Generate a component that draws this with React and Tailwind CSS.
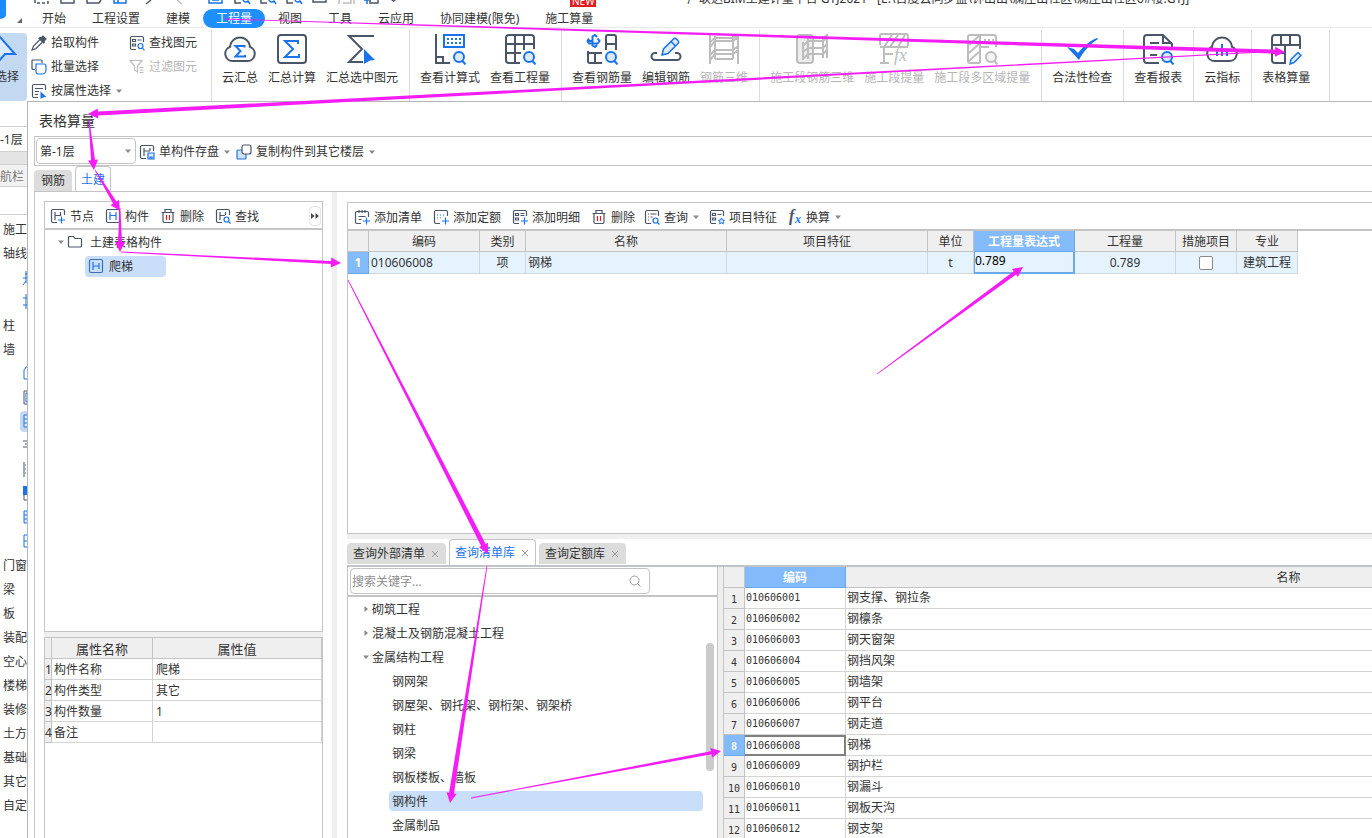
import React, { useState } from 'react';

const DARK = '#4b5568';
const BLUE = '#1a73e8';
const GRAY = '#bdbdbd';

const MENU = ['开始', '工程设置', '建模', '工程量', '视图', '工具', '云应用', '协同建模(限免)', '施工算量'];

const RIBBON = [
  [
    { label: '云汇总', icon: 'cloudSum' },
    { label: '汇总计算', icon: 'sum' },
    { label: '汇总选中图元', icon: 'sumSelected' },
  ],
  [
    { label: '查看计算式', icon: 'formula' },
    { label: '查看工程量', icon: 'gridView' },
  ],
  [
    { label: '查看钢筋量', icon: 'rebarView' },
    { label: '编辑钢筋', icon: 'rebarEdit' },
    { label: '钢筋三维', icon: 'rebar3d', disabled: true },
  ],
  [
    { label: '施工段钢筋三维', icon: 'section3d', disabled: true },
    { label: '施工段提量', icon: 'sectionFx', disabled: true },
    { label: '施工段多区域提量', icon: 'sectionArea', disabled: true },
  ],
  [{ label: '合法性检查', icon: 'check' }],
  [{ label: '查看报表', icon: 'report' }],
  [{ label: '云指标', icon: 'cloudChart' }],
  [{ label: '表格算量', icon: 'tableEdit' }],
];

const NAV = [
  { text: '施工' },
  { text: '轴线' },
  { icon: 'axis' },
  { icon: 'axis2' },
  { text: '柱' },
  { text: '墙' },
  { icon: 'box' },
  { icon: 'double' },
  { icon: 'grid', active: true },
  { icon: 'lines' },
  { icon: 'dots' },
  { icon: 'solid' },
  { icon: 'grid' },
  { icon: 'window' },
  { text: '门窗' },
  { text: '梁' },
  { text: '板' },
  { text: '装配' },
  { text: '空心' },
  { text: '楼梯' },
  { text: '装修' },
  { text: '土方' },
  { text: '基础' },
  { text: '其它' },
  { text: '自定' },
];

const PROPS = [
  ['构件名称', '爬梯'],
  ['构件类型', '其它'],
  ['构件数量', '1'],
  ['备注', ''],
];

const CHAPTERS = ['钢网架', '钢屋架、钢托架、钢桁架、钢架桥', '钢柱', '钢梁', '钢板楼板、墙板', '钢构件', '金属制品'];

const ITEMS = [
  '钢支撑、钢拉条',
  '钢檩条',
  '钢天窗架',
  '钢挡风架',
  '钢墙架',
  '钢平台',
  '钢走道',
  '钢梯',
  '钢护栏',
  '钢漏斗',
  '钢板天沟',
  '钢支架',
];

// x1, y1, x2, y2, thickness at the head
const ARROWS = [
  [225, 19, 1285, 52, 4],
  [1262, 52, 88, 114, 4],
  [89, 120, 94, 170, 4],
  [95, 170, 120, 211, 4],
  [120, 208, 120, 252, 4],
  [121, 252, 341, 263, 3],
  [348, 280, 488, 554, 5],
  [487, 566, 450, 803, 5],
  [471, 798, 721, 751, 3],
  [877, 374, 1023, 267, 4],
];

const CLOUD = 'M8.5 28a7.3 7.3 0 0 1-2.3-14.2V12.600a10 10 0 0 1 19.600 0V13.800A7.300 7.300 0 0 1 23.500 28z';
const GRID_FRAME = 'M30 16V5a3 3 0 0 0-3-3H5a3 3 0 0 0-3 3v22a3 3 0 0 0 3 3h11';

function Lens({ color = BLUE, fill = '#dbeafc' }) {
  return (
    <g stroke={color}>
      <circle cx="25" cy="24" r="5" fill={fill} />
      <path d="M28.500 28l3 3.500" />
    </g>
  );
}

const BIG = {
  cloudSum: (
    <>
      <path d={CLOUD} />
      <path stroke={BLUE} d="M20.500 14.500V13H11.500l5 5-5 5.500h9.500V22" />
    </>
  ),
  sum: (
    <>
      <rect x="2" y="2" width="28" height="28" rx="3" />
      <path stroke={BLUE} d="M22 11V8H9l8 8-8 8h14v-3" />
    </>
  ),
  sumSelected: (
    <>
      <path d="M28 3H3l13 13L3 29h14" />
      <path fill={BLUE} stroke="none" d="M18 16l11 11-5 .500-6 3.500z" />
    </>
  ),
  formula: (
    <>
      <path d="M2 1v29h14M2 24h7v6" />
      <rect x="10" y="2" width="20" height="12" stroke={BLUE} />
      <path stroke={BLUE} strokeDasharray="2 2" d="M13 6h14M13 10h14" />
      <Lens />
    </>
  ),
  gridView: (
    <>
      <path d={GRID_FRAME} />
      <path d="M2 11h28M2 20h15M11 2v28M20 2v15" />
      <Lens />
    </>
  ),
  rebarView: (
    <>
      <path d="M20 17V4a2 2 0 0 1 2-2h6a2 2 0 0 1 2 2v13M20 11h10M2 18v10a2 2 0 0 0 2 2h12M2 20h14M9 20v10" />
      <path stroke={BLUE} d="M11 4L9 2 6.500 3.500v9L9 14l2-2M3 5.500L1.500 8 3 10.500h8.500l2-2.500-2-2.500M1.500 8h4" />
      <Lens />
    </>
  ),
  rebarEdit: (
    <>
      <path d="M7 20H5a3.500 3.500 0 0 0 0 7h22a3.500 3.500 0 0 0 0-7h-2" />
      <g stroke={BLUE} strokeWidth="1.500">
        <path fill="#dbeafc" d="M12 22l1.500-6L23.500 6a2 2 0 0 1 3 0l1.500 1.500a2 2 0 0 1 0 3L18 20.500z" />
        <path d="M21 8.500l4.500 4.500" />
      </g>
    </>
  ),
  rebar3d: <path d="M2 1v30M7 3v23M25 3v23M30 1v30M2 9l5-4h18l5-3M2 14l5-6h18l5-4M2 22l5-5h18l5-4M2 27l5-6h18l5-4M7 26h18" />,
  section3d: (
    <>
      <rect x="1" y="2" width="16" height="28" rx="3" fill="#ececec" />
      <path d="M7 9v18M12 4v22M27 3v22M31 1v24M7 13l5-5h15l4-3M7 19l5-4h15l4-4M7 26l5-5h15l4-4M12 5h15l4-3" />
    </>
  ),
  sectionFx: (
    <>
      <path d="M2 12V3a2 2 0 0 1 2-2h24a2 2 0 0 1 2 2v10M2 14h28M6 14l8-12M12 14l8-12M20 14l7-12M6 15v15M2 30h9M6 21h9" />
      <text x="16" y="28" fontSize="18" fontStyle="italic" fontFamily="Liberation Serif, serif" fill={GRAY} stroke="none">
        fx
      </text>
    </>
  ),
  sectionArea: (
    <>
      <path d="M14 30H4a2 2 0 0 1-2-2V4a2 2 0 0 1 2-2h24a2 2 0 0 1 2 2v10M14 2v28M3 12l10-9M3 20l10-9M3 28l10-9M14 14h9" />
      <path strokeDasharray="2 2" d="M18 7h10" />
      <Lens color={GRAY} fill="#f5f5f5" />
    </>
  ),
  check: <path fill={BLUE} stroke="none" d="M1 14l7 2 4 4C17 14 23 8 31 5l1 1C24 11 17 19 13 27z" />,
  report: (
    <>
      <path d="M17 30H5a3 3 0 0 1-3-3V5a3 3 0 0 1 3-3h16l9 9v4M21 2v8h9M8 10h9M8 22h7" />
      <Lens />
    </>
  ),
  cloudChart: (
    <>
      <path d={CLOUD} />
      <path stroke={BLUE} d="M11 17v6M16 11v12M21 16v7" />
    </>
  ),
  tableEdit: (
    <>
      <path d={GRID_FRAME} />
      <path d="M2 12h28M2 20h14M11 2v10M20 2v10M15 12v18" />
      <path stroke={BLUE} strokeWidth="1.500" fill="#dbeafc" d="M20 31l1-4.500 7-7 3 3-7 7z" />
    </>
  ),
};

function BigIcon({ name, disabled }) {
  return (
    <svg className="h-8 w-8 shrink-0" viewBox="0 0 32 32" fill="none" stroke={disabled ? GRAY : DARK} strokeWidth="2">
      {BIG[name]}
    </svg>
  );
}

const FRAME = 'M7 14.500H3A1.500 1.500 0 0 1 1.500 13V3A1.500 1.500 0 0 1 3 1.500h10A1.500 1.500 0 0 1 14.500 3v4';

const SMALL = {
  picker: (
    <>
      <path fill={DARK} d="M10 3l2-2 3 3-2 2 .500 1-1 1L8 3.500l1-1z" />
      <path d="M8.500 5L2.500 11l-1.500 4 4-1.500L11 7.500" />
    </>
  ),
  batch: (
    <>
      <path d="M4 10.500H2A1 1 0 0 1 1 9.500V2a1 1 0 0 1 1-1h8a1 1 0 0 1 1 1v2" />
      <path stroke={BLUE} fill="#fff" d="M5 5h8a2 2 0 0 1 2 2v4a4 4 0 0 1-4 4H7.500A2.500 2.500 0 0 1 5 12.500z" />
    </>
  ),
  byProp: (
    <>
      <path d={FRAME} />
      <path d="M4 5.500h8M4 8.500h4M4 11.500h3" />
      <path fill={BLUE} stroke="none" d="M9.500 8.500l6 5.500-3.500.500-2.500 1.500z" />
    </>
  ),
  find: (
    <>
      <path d={FRAME} />
      <path d="M3.500 4.500h3v2h-3zM3.500 9h3v2h-3zM8.500 5h4" />
      <circle cx="11.500" cy="11" r="2.500" stroke={BLUE} />
      <path stroke={BLUE} d="M13.500 13l2 2.500" />
    </>
  ),
  filter: <path stroke={GRAY} d="M1 1.500h12L8.500 7v6L5.500 11V7zM10.500 8.500h4M10.500 11h4M10.500 13.500h4" />,
  save: (
    <>
      <path d={FRAME} />
      <path d="M5 4v8M5 7h6M11 4v3" />
      <path stroke={BLUE} fill="#dbeafc" d="M9 9h6v6H9zM11 15v-2h2v2" />
    </>
  ),
  copy: (
    <>
      <rect x="1" y="6" width="9" height="9" rx="1" stroke={BLUE} fill="#cfe3fb" />
      <rect x="6" y="1" width="9" height="9" rx="2" fill="#fff" />
    </>
  ),
  node: (
    <>
      <path d={FRAME} />
      <path d="M5 4v8M5 7.500h5M10.500 4v4" />
      <path stroke={BLUE} d="M8 12h7M11.500 8.500v7" />
    </>
  ),
  component: (
    <>
      <rect x="1.500" y="1.500" width="13" height="13" rx="1.500" />
      <path stroke={BLUE} d="M5 4v8M5 7.500h6M11 4v8" />
    </>
  ),
  trash: (
    <>
      <path d="M1.500 4.500h13M5 4V1.500h6V4M3 4.500V13a1.500 1.500 0 0 0 1.500 1.500h7A1.500 1.500 0 0 0 13 13V4.500" />
      <path stroke="#e02020" d="M6.500 7v5M9.500 7v5" />
    </>
  ),
  search: (
    <>
      <path d={FRAME} />
      <path d="M5 4v8M5 7.500h5M10.500 4v3" />
      <circle cx="11.500" cy="11.500" r="2.500" stroke={BLUE} />
      <path stroke={BLUE} d="M13.500 13.500l2 2" />
    </>
  ),
  addList: (
    <>
      <path d="M7 14.500H3A1.500 1.500 0 0 1 1.500 13V4A1.500 1.500 0 0 1 3 2.500h10A1.500 1.500 0 0 1 14.500 4v4M5 1v3M8 1v3M11 1v3M4.500 7.500h7M4.500 10.500h3" />
      <path stroke={BLUE} d="M9 12h7M12.500 8.500v7" />
    </>
  ),
  addQuota: (
    <>
      <path d={FRAME} />
      <path stroke={BLUE} strokeDasharray="1 2" d="M4 6h8M4 9h5" />
      <path stroke={BLUE} d="M9 12h7M12.500 8.500v7" />
    </>
  ),
  addDetail: (
    <>
      <path d={FRAME} />
      <path d="M3.500 4.500h3v2h-3zM3.500 9h3v2h-3zM8.500 4.500h4M8.500 6.500h4" />
      <path stroke={BLUE} d="M9 12h7M12.500 8.500v7" />
    </>
  ),
  query: (
    <>
      <path d={FRAME} />
      <path d="M4 5h1M6.500 5h6M4 8h1M6.500 8h2M4 11h1" />
      <circle cx="11.500" cy="11.500" r="2.500" stroke={BLUE} />
      <path stroke={BLUE} d="M13.500 13.500l2 2" />
    </>
  ),
  feature: (
    <>
      <path d={FRAME} />
      <path d="M3.500 4.500h3v2h-3zM3.500 9h3v2h-3zM8.500 5.500h4" />
      <path stroke={BLUE} fill="#dbeafc" strokeWidth="1" d="M12.500 9l1 2 2 .300-1.500 1.400.400 2.100-1.900-1-1.900 1 .400-2.100-1.500-1.400 2-.300z" />
    </>
  ),
  folder: <path d="M1.500 12V3.500a1 1 0 0 1 1-1h4l1.500 2h5.500a1 1 0 0 1 1 1V12a1 1 0 0 1-1 1h-11a1 1 0 0 1-1-1z" />,
  ladder: (
    <>
      <rect x="1.500" y="1.500" width="13" height="13" rx="1.500" stroke="#3a6fb5" />
      <path stroke={BLUE} d="M5 4v8M5 8h6M11 5v6" />
    </>
  ),
};

function Icon({ name }) {
  return (
    <svg className="h-4 w-4 shrink-0" viewBox="0 0 16 16" fill="none" stroke={DARK} strokeWidth="1.2">
      {SMALL[name]}
    </svg>
  );
}

function Caret({ open = true }) {
  return (
    <svg className="h-2 w-2 shrink-0" viewBox="0 0 8 8" fill="#8a8a8a">
      {open ? <path d="M1 2.500h6L4 6z" /> : <path d="M2.500 1v6L6 4z" />}
    </svg>
  );
}

function ToolButton({ icon, label, disabled, caret }) {
  return (
    <button disabled={disabled} className="flex items-center gap-1 whitespace-nowrap disabled:text-[#b5b5b5]">
      <Icon name={icon} />
      <span className="pt-px">{label}</span>
      {caret && <Caret />}
    </button>
  );
}

function FxButton() {
  return (
    <button className="ml-0.5 flex items-center gap-1 whitespace-nowrap">
      <svg className="h-4 w-3.5" viewBox="0 0 14 16" fontStyle="italic" fontWeight="bold" fontFamily="Liberation Serif, serif">
        <text x="1" y="12" fontSize="16" fill={DARK}>f</text>
        <text x="7" y="14" fontSize="12" fill={BLUE}>x</text>
      </svg>
      <span className="pt-px">换算</span>
      <Caret />
    </button>
  );
}

function TitleBar() {
  return (
    <div className="relative flex h-[9px] shrink-0 items-end">
      <svg className="h-[9px] w-[400px] shrink-0" viewBox="0 0 400 9" fill="none" stroke={DARK} strokeWidth="1.500">
        <path stroke="none" fill="#1a8cff" d="M0 0h6v9H0z" />
        <path strokeDasharray="3 2" d="M35 0v3h13V0" />
        <path d="M61 0v3h13V0M87 0v3h12l2-3M146 4l5-4M313 0v2h13V0" />
        <path stroke={BLUE} d="M114 0v3h12V0M118 0v3M209 0v3h13V0M212 0h7" />
        <path stroke={GRAY} d="M182 4l-5-4M339 4V0M343 3h8V0M354 4V0" />
        <path d="M235 0v3h6M261 0v3h6M287 0v3h6M370 0v3h8V0" />
        <g stroke={BLUE}>
          <path d="M243 0a3 3 0 0 0 5 1l2 3M269 0a3 3 0 0 0 5 1l2 3M295 0a3 3 0 0 0 5 1l2 3M364 0h6M367 0v4" />
        </g>
        <path fill={DARK} stroke="none" d="M391 0h5l-2.500 2z" />
      </svg>
      <h1 className="mb-0.5 ml-[287px] text-xs leading-4 whitespace-nowrap">
        广联达BIM土建计量平台 GTJ2021 - [E:\百度云同步盘\钟山出\澜庄出社区\澜庄出社区6#楼.GTJ]
      </h1>
      <span className="absolute bottom-0.5 left-[570px] bg-[#e02020] px-0.5 text-[10px] leading-3 text-white">NEW</span>
    </div>
  );
}

function MenuBar() {
  const [active, setActive] = useState('工程量');
  return (
    <nav className="flex h-[19px] shrink-0 border-b border-[#e8e8e8]">
      <div className="flex w-[29px] shrink-0 items-center">
        <svg className="h-[19px] w-[26px]" viewBox="0 0 26 19">
          <path fill="#1a8cff" d="M0 0h6v6q0 3-6 4z" />
          <path fill="#666" d="M22 9v5h-5z" />
        </svg>
      </div>
      {MENU.map((m) => (
        <button
          key={m}
          onClick={() => setActive(m)}
          className={
            m === active
              ? 'h-[19px] rounded-full bg-[#1e8fff] px-[13px] text-white'
              : 'h-[19px] px-[13px] whitespace-nowrap'
          }
        >
          {m}
        </button>
      ))}
    </nav>
  );
}

function Ribbon() {
  return (
    <div className="flex h-[73px] shrink-0 pt-0.5">
      <div className="flex w-[212px] shrink-0 border-r border-[#dcdcdc]">
        <button className="mt-[3px] flex w-[27px] shrink-0 flex-col items-end gap-0.5 overflow-hidden rounded-r bg-[#c3d9f2] pr-2">
          <svg className="h-[34px] w-5 shrink-0" viewBox="0 0 20 34" fill="#dbeafc" stroke={BLUE} strokeWidth="2">
            <path d="M-6-4l22 25H6l-8 9z" />
          </svg>
          <span className="leading-4 whitespace-nowrap">选择</span>
        </button>
        <div className="flex flex-1 flex-col gap-[7px] pt-1 pl-1">
          <ToolButton icon="picker" label="拾取构件" />
          <ToolButton icon="batch" label="批量选择" />
          <ToolButton icon="byProp" label="按属性选择" caret />
        </div>
        <div className="flex flex-col gap-[7px] pt-1 pr-3.5">
          <ToolButton icon="find" label="查找图元" />
          <ToolButton icon="filter" label="过滤图元" disabled />
        </div>
      </div>
      {RIBBON.map((group) => (
        <div key={group[0].label} className="flex shrink-0 border-r border-[#dcdcdc] pr-1.5 pl-[5px] last:pr-3.5">
          {group.map((b) => (
            <button
              key={b.label}
              disabled={b.disabled}
              className="flex flex-col items-center gap-[5px] px-[5px] pt-[3px] disabled:text-[#b5b5b5]"
            >
              <BigIcon name={b.icon} disabled={b.disabled} />
              <span className="leading-4 whitespace-nowrap">{b.label}</span>
            </button>
          ))}
        </div>
      ))}
    </div>
  );
}

const NAV_SHAPES = {
  axis: <path stroke={BLUE} d="M2 5h4M0 9h6M2 13h4M3 2v10l-3 4" />,
  axis2: <path stroke={BLUE} d="M0 5h6M0 12h6M3 1v15" />,
  box: <path stroke={BLUE} d="M6 2H3L1 5v9h5" />,
  double: (
    <>
      <path d="M6 2H1v13h5" />
      <path stroke={BLUE} d="M6 4H3v9h3" />
    </>
  ),
  grid: <path stroke={BLUE} fill="#dbeafc" d="M6 2H1v12h5M1 6h5M1 10h5" />,
  lines: <path d="M0 4h5M2 7h4M0 10h6" />,
  dots: (
    <>
      <path d="M1 1v15" />
      <path stroke={BLUE} strokeDasharray="1 1" d="M2 4h4M2 8h4M2 12h4" />
    </>
  ),
  solid: (
    <>
      <path stroke="none" fill={BLUE} d="M0 1h6v9H0z" />
      <path d="M1 10v5h5" />
    </>
  ),
  window: <path stroke={BLUE} d="M6 2H1v12h5M1 8h5" />,
};

function NavPanel() {
  return (
    <aside className="flex w-[27px] shrink-0 flex-col overflow-hidden pt-[25px]">
      <div className="h-[26px] shrink-0 border-y border-[#d0d0d0] pt-px text-right leading-6 whitespace-nowrap">
        <span className="mr-1.5">-1层</span>
      </div>
      <div className="h-[13px] shrink-0 border-b border-[#d0d0d0] bg-[#e4e4e4]" />
      <div className="h-[22px] shrink-0 border-b border-[#d0d0d0] bg-[#f2f2f2] pt-px leading-[22px] text-[#777]">航栏</div>
      <div className="h-[28px] shrink-0 border-b border-[#d0d0d0]" />
      <ul className="pt-0.5">
        {NAV.map((n, i) => (
          <li key={i} className="flex h-6 items-center">
            {n.text ? (
              <span className="pt-0.5 pl-[3px] whitespace-nowrap">{n.text}</span>
            ) : (
              <span className={n.active ? 'ml-5 flex h-[21px] flex-1 items-center rounded-l-sm bg-[#c3d9f2] pl-[3px]' : 'pl-[23px]'}>
                <svg className="h-4 w-1.5" viewBox="0 0 6 16" fill="none" stroke={DARK}>
                  {NAV_SHAPES[n.icon]}
                </svg>
              </span>
            )}
          </li>
        ))}
      </ul>
    </aside>
  );
}

function PropertyTable() {
  return (
    <table className="w-full table-fixed border-separate border-spacing-0">
      <colgroup>
        <col className="w-[7px]" />
        <col className="w-[101px]" />
        <col />
      </colgroup>
      <thead>
        <tr className="h-[21px] bg-[#efefef] text-[13px] leading-[18px]">
          <th className="border-r border-b border-[#c4c4c4] p-0" />
          <th className="border-r border-b border-[#c4c4c4] p-0 pt-0.5 font-normal">属性名称</th>
          <th className="border-r border-b border-[#c4c4c4] p-0 pt-0.5 font-normal">属性值</th>
        </tr>
      </thead>
      <tbody>
        {PROPS.map(([name, value], i) => (
          <tr key={name} className="h-[21px]">
            <td className="border-r border-b border-[#c4c4c4] bg-[#efefef] p-0 pt-0.5">{i + 1}</td>
            <td className="border-r border-b border-[#d4d4d4] p-0 pt-0.5 pl-0.5">{name}</td>
            <td className="border-r border-b border-[#d4d4d4] p-0 pt-0.5 pl-[3px]">{value}</td>
          </tr>
        ))}
      </tbody>
    </table>
  );
}

function ComponentPanel() {
  return (
    <section className="flex w-[297px] shrink-0 flex-col px-[9px] pt-[9px]">
      <div className="flex h-[431px] shrink-0 flex-col border border-[#c4c4c4]">
        <div className="flex h-7 shrink-0 items-center gap-[11px] border-b-2 border-[#c4c4c4] pt-0.5 pr-px pl-[5px]">
          <ToolButton icon="node" label="节点" />
          <ToolButton icon="component" label="构件" />
          <ToolButton icon="trash" label="删除" />
          <ToolButton icon="search" label="查找" />
          <button aria-label="更多" className="ml-auto flex h-5 w-3 items-center justify-center rounded border border-[#e4e4e4]">
            <svg className="h-1.5 w-2" viewBox="0 0 8 6" fill="#444">
              <path d="M0 0l3.500 3L0 6zM4.500 0L8 3 4.500 6z" />
            </svg>
          </button>
        </div>
        <ul>
          <li className="flex h-6 items-center pl-3">
            <Caret />
            <span className="ml-0.5"><Icon name="folder" /></span>
            <span className="ml-[7px] pt-0.5">土建表格构件</span>
          </li>
          <li className="flex h-6 items-center pl-10">
            <button className="flex h-[21px] w-[81px] items-center gap-[5px] rounded-sm bg-[#c9dff9] pl-[3px]">
              <Icon name="ladder" />
              <span className="pt-px">爬梯</span>
            </button>
          </li>
        </ul>
      </div>
      <div className="h-[5px] shrink-0 bg-[#efefef]" />
      <div className="min-h-0 flex-1 border border-b-0 border-[#c4c4c4]">
        <PropertyTable />
      </div>
    </section>
  );
}

function ListTable() {
  const head = 'border-r border-b border-[#c4c4c4] p-0 pt-0.5 font-normal';
  const cell = 'border-r border-b border-[#cfd6dd] p-0';
  return (
    <table className="w-[950px] table-fixed border-separate border-spacing-0">
      <colgroup>
        <col className="w-[21px]" />
        <col className="w-[111px]" />
        <col className="w-[46px]" />
        <col className="w-[201px]" />
        <col className="w-[201px]" />
        <col className="w-[46px]" />
        <col className="w-[101px]" />
        <col className="w-[101px]" />
        <col className="w-[61px]" />
        <col className="w-[61px]" />
      </colgroup>
      <thead>
        <tr className="h-[21px] bg-[#efefef]">
          <th className={head} />
          <th className={head}>编码</th>
          <th className={head}>类别</th>
          <th className={head}>名称</th>
          <th className={head}>项目特征</th>
          <th className={head}>单位</th>
          <th className="border-r border-b border-[#6ba8ea] bg-[#82bafa] p-0 pt-0.5 font-bold text-white">工程量表达式</th>
          <th className={head}>工程量</th>
          <th className={head}>措施项目</th>
          <th className={head}>专业</th>
        </tr>
      </thead>
      <tbody>
        <tr className="h-[22px] bg-[#e5f3ff] text-center">
          <td className="border-r border-b border-[#6ba8ea] bg-[#82bafa] p-0 font-bold text-white">1</td>
          <td className={cell + ' pl-0.5 text-left'}>010606008</td>
          <td className={cell}>项</td>
          <td className={cell + ' pl-0.5 text-left'}>钢梯</td>
          <td className={cell} />
          <td className={cell}>t</td>
          <td className="p-0">
            <input
              aria-label="工程量表达式"
              defaultValue="0.789"
              className="block h-[22px] w-full border-t-0 border-r-2 border-b-2 border-l border-[#6ba8ea] bg-[#e5f3ff] pb-1 text-black outline-none"
            />
          </td>
          <td className={cell}>0.789</td>
          <td className={cell}>
            <input
              type="checkbox"
              aria-label="措施项目"
              className="mx-auto block h-3.5 w-3.5 appearance-none rounded-xs border border-[#8a8a8a] bg-white"
            />
          </td>
          <td className={cell}>建筑工程</td>
        </tr>
      </tbody>
    </table>
  );
}

function ChapterTree() {
  return (
    <div className="flex w-[371px] shrink-0 flex-col border-r border-l border-[#c4c4c4]">
      <div className="flex h-[30px] shrink-0 items-center border-b-2 border-[#c4c4c4] pl-0.5">
        <label className="flex h-[26px] w-[300px] items-center rounded border border-[#c4c4c4] pr-2 pl-px">
          <input placeholder="搜索关键字..." aria-label="搜索关键字" className="min-w-0 flex-1 pt-0.5 outline-none placeholder:text-[#8f8f8f]" />
          <svg className="h-3 w-3" viewBox="0 0 12 12" fill="none" stroke="#999">
            <circle cx="5.500" cy="5.500" r="4.500" />
            <path d="M8.500 8.500l3 3" />
          </svg>
        </label>
      </div>
      <div className="flex min-h-0 flex-1">
        <ul className="flex-1">
          {['砌筑工程', '混凝土及钢筋混凝土工程', '金属结构工程'].map((t, i) => (
            <li key={t} className="flex h-6 items-center gap-0.5 pl-3.5">
              <Caret open={i === 2} />
              <span className="pt-0.5">{t}</span>
            </li>
          ))}
          {CHAPTERS.map((t) => (
            <li key={t} className="flex h-6 items-center pl-[41px]">
              <button
                className={
                  t === '钢构件'
                    ? 'h-5 flex-1 rounded-sm bg-[#c9dff9] pt-0.5 pl-[3px] text-left'
                    : 'h-5 flex-1 pt-0.5 pl-[3px] text-left'
                }
              >
                {t}
              </button>
            </li>
          ))}
        </ul>
        <div className="w-3.5 shrink-0 pt-[46px] pl-[3px]">
          <div className="h-32 w-2 rounded-full bg-[#cbcbcb]" />
        </div>
      </div>
    </div>
  );
}

function ItemTable() {
  return (
    <div className="min-w-0 flex-1 overflow-hidden border-l border-[#c4c4c4]">
      <table className="w-[1008px] table-fixed border-separate border-spacing-0">
        <colgroup>
          <col className="w-[21px]" />
          <col className="w-[101px]" />
          <col />
        </colgroup>
        <thead>
          <tr className="h-[21px] bg-[#efefef]">
            <th className="border-r border-b border-[#c4c4c4] p-0" />
            <th className="border-r border-b border-[#6ba8ea] bg-[#82bafa] p-0 pt-0.5 font-bold text-white">编码</th>
            <th className="border-r border-b border-[#c4c4c4] p-0 pt-0.5 font-normal">名称</th>
          </tr>
        </thead>
        <tbody className='font-["DejaVu_Sans_Mono","Noto_Sans_CJK_SC",monospace] text-[10px]'>
          {ITEMS.map((name, i) => {
            const active = i === 7;
            return (
              <tr key={name} className="h-[21px] leading-4">
                <td
                  className={
                    active
                      ? 'border-r border-b border-[#6ba8ea] bg-[#82bafa] p-0 pt-1 text-center font-bold text-white'
                      : 'border-r border-b border-[#c4c4c4] bg-[#efefef] p-0 pt-1 text-center'
                  }
                >
                  {i + 1}
                </td>
                <td
                  className={
                    active
                      ? 'border-2 border-l-0 border-[#808080] p-0 pl-px'
                      : 'border-r border-b border-[#d4d4d4] p-0 pl-px'
                  }
                >
                  {'010606' + String(i + 1).padStart(3, '0')}
                </td>
                <td className="border-b border-[#d4d4d4] p-0 pl-px text-xs leading-4">{name}</td>
              </tr>
            );
          })}
        </tbody>
      </table>
    </div>
  );
}

function QueryTabs() {
  const [active, setActive] = useState('查询清单库');
  return (
    <div className="flex h-[26px] shrink-0 items-end gap-[3px]">
      {['查询外部清单', '查询清单库', '查询定额库'].map((t) => (
        <button
          key={t}
          onClick={() => setActive(t)}
          className={
            t === active
              ? 'flex h-[26px] items-center gap-[5px] rounded-t border border-b-0 border-[#c4c4c4] bg-white px-[5px] text-[#1a73e8]'
              : 'mb-px flex h-[21px] items-center gap-[5px] rounded-t bg-[#dcdcdc] px-1.5'
          }
        >
          {t}
          <svg className="h-2 w-2.5" viewBox="0 0 10 8" stroke="#999">
            <path d="M2 1l6 6M8 1L2 7" />
          </svg>
        </button>
      ))}
    </div>
  );
}

function DetailPanel() {
  return (
    <section className="flex min-w-0 flex-1 flex-col pl-2.5">
      <div className="mt-2.5 flex h-[332px] shrink-0 flex-col overflow-hidden border border-r-0 border-[#c4c4c4]">
        <div className="flex h-7 shrink-0 items-center gap-[9px] border-b-2 border-[#c4c4c4] pt-0.5 pl-1.5">
          <div className="flex gap-[11px]">
            <ToolButton icon="addList" label="添加清单" />
            <ToolButton icon="addQuota" label="添加定额" />
            <ToolButton icon="addDetail" label="添加明细" />
            <ToolButton icon="trash" label="删除" />
          </div>
          <ToolButton icon="query" label="查询" caret />
          <ToolButton icon="feature" label="项目特征" />
          <FxButton />
        </div>
        <ListTable />
      </div>
      <div className="h-[5px] shrink-0 bg-[#efefef]" />
      <QueryTabs />
      <div className="flex min-h-0 flex-1 border-t-2 border-[#c0c4ca]">
        <ChapterTree />
        <div className="w-[5px] shrink-0 bg-[#efefef]" />
        <ItemTable />
      </div>
    </section>
  );
}

function Workspace() {
  return (
    <main className="flex min-w-0 flex-1 flex-col border-t border-l border-[#b4b6ba] pl-1.5">
      <h2 className="h-[34px] shrink-0 pt-[7px] pl-[5px] text-sm leading-6">表格算量</h2>
      <div className="flex h-[30px] shrink-0 items-center border border-r-0 border-[#c4c4c4] pl-px">
        <div className="relative">
          <select
            aria-label="楼层"
            className="block h-[26px] w-[100px] appearance-none rounded border border-[#c4c4c4] bg-white pt-0.5 pl-[3px] outline-none"
          >
            <option>第-1层</option>
          </select>
          <span className="pointer-events-none absolute top-[9px] right-1">
            <Caret />
          </span>
        </div>
        <div className="ml-[3px] flex gap-[5px] pt-px">
          <ToolButton icon="save" label="单构件存盘" caret />
          <ToolButton icon="copy" label="复制构件到其它楼层" caret />
        </div>
      </div>
      <div className="flex h-[25px] shrink-0 items-end gap-[3px]">
        <button className="h-[21px] w-[38px] rounded-t bg-[#dcdcdc]">钢筋</button>
        <button className="-mb-px h-[26px] w-9 rounded-t border border-b-0 border-[#c4c4c4] bg-white text-[#1a73e8]">土建</button>
      </div>
      <div className="flex min-h-0 flex-1 border-t border-l border-[#c4c4c4]">
        <ComponentPanel />
        <div className="w-[5px] shrink-0 bg-[#efefef]" />
        <DetailPanel />
      </div>
    </main>
  );
}

function arrowPoints([x1, y1, x2, y2, w]) {
  const len = Math.hypot(x2 - x1, y2 - y1);
  const ux = (x2 - x1) / len;
  const uy = (y2 - y1) / len;
  const bx = x2 - ux * 10;
  const by = y2 - uy * 10;
  const at = (x, y, d) => `${x - uy * d},${y + ux * d}`;
  return [
    at(x1, y1, 0.4),
    at(bx, by, w / 2),
    at(bx, by, 5),
    `${x2},${y2}`,
    at(bx, by, -5),
    at(bx, by, -w / 2),
    at(x1, y1, -0.4),
  ].join(' ');
}

function Arrows() {
  return (
    <svg className="pointer-events-none absolute top-0 left-0" width="1372" height="838" fill="#f51df5">
      {ARROWS.map((a) => (
        <polygon key={a.join()} points={arrowPoints(a)} />
      ))}
    </svg>
  );
}

export default function App() {
  return (
    <div className='relative flex h-screen flex-col overflow-hidden bg-white font-["Noto_Sans","Noto_Sans_CJK_SC",sans-serif] text-xs text-[#333]'>
      <TitleBar />
      <MenuBar />
      <Ribbon />
      <div className="flex min-h-0 flex-1">
        <NavPanel />
        <Workspace />
      </div>
      <Arrows />
    </div>
  );
}
